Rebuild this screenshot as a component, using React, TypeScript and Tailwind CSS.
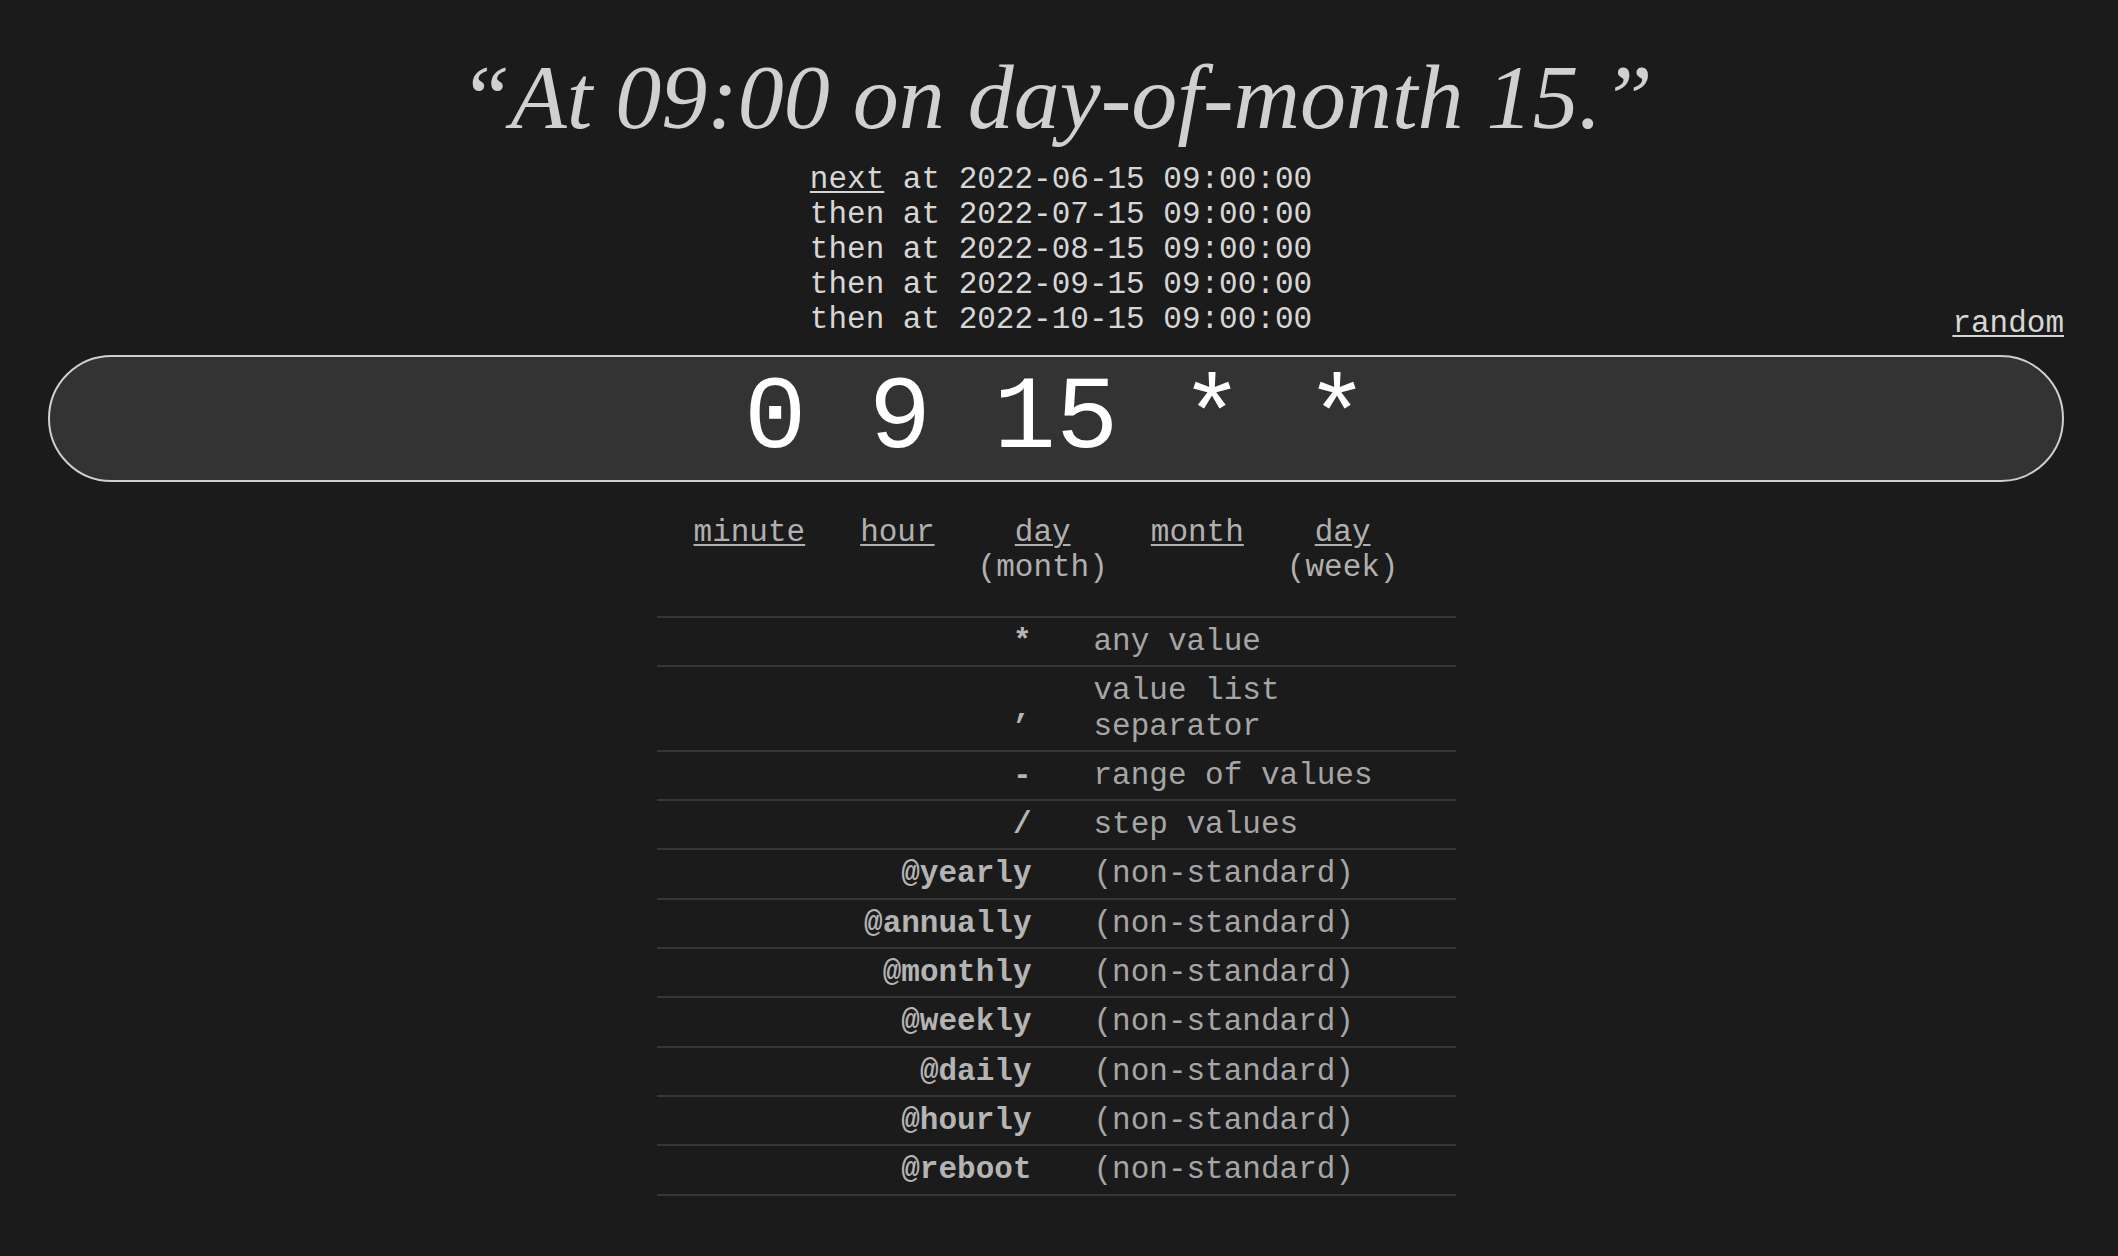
import React from "react";

const mono = { fontFamily: "'Liberation Mono', 'DejaVu Sans Mono', monospace" };

const rows: { sym: string; desc: string; bold?: boolean }[] = [
  { sym: "*", desc: "any value" },
  { sym: ",", desc: "value list separator" },
  { sym: "-", desc: "range of values" },
  { sym: "/", desc: "step values" },
  { sym: "@yearly", desc: "(non-standard)" },
  { sym: "@annually", desc: "(non-standard)" },
  { sym: "@monthly", desc: "(non-standard)" },
  { sym: "@weekly", desc: "(non-standard)" },
  { sym: "@daily", desc: "(non-standard)" },
  { sym: "@hourly", desc: "(non-standard)" },
  { sym: "@reboot", desc: "(non-standard)" },
];

export default function App() {
  return (
    <div className="min-h-screen w-full bg-[#1b1b1b]" style={mono}>
      <div className="ml-[48px] w-[2016px] flex flex-col items-center pt-[47px] pb-[60px]">
        <h1
          className="text-[92px] leading-[100px] italic font-normal text-[#d0d0d0] whitespace-nowrap"
          style={{ fontFamily: "'Liberation Serif', 'DejaVu Serif', serif" }}
        >
          “At 09:00 on day-of-month 15.”
        </h1>

        <div className="mt-[15px] pl-[10px] text-[31px] leading-[35px] text-[#d6d6d6] whitespace-pre">
          <div>
            <span className="underline decoration-2 underline-offset-[3px]">next</span> at 2022-06-15 09:00:00
          </div>
          <div>then at 2022-07-15 09:00:00</div>
          <div>then at 2022-08-15 09:00:00</div>
          <div>then at 2022-09-15 09:00:00</div>
          <div>then at 2022-10-15 09:00:00</div>
        </div>

        <div className="self-stretch flex justify-end -mt-[31px] text-[31px] leading-[35px] text-[#d6d6d6]">
          <span className="underline decoration-2 underline-offset-[3px]">random</span>
        </div>

        <div className="mt-[14px] h-[127px] w-full rounded-full border-2 border-[#cfcfcf] bg-[#333333] flex items-center justify-center text-[104px] text-white whitespace-pre leading-none">
          0 9 15 * *
        </div>

        <div className="mt-[33px] w-full flex justify-center pr-[20px] text-[31px] leading-[35px] text-[#b0b0b0]">
          <div className="flex flex-col items-center mr-[55px]">
            <span className="underline decoration-2 underline-offset-[3px]">minute</span>
          </div>
          <div className="flex flex-col items-center mr-[43px]">
            <span className="underline decoration-2 underline-offset-[3px]">hour</span>
          </div>
          <div className="flex flex-col items-center mr-[43px]">
            <span className="underline decoration-2 underline-offset-[3px]">day</span>
            <span>(month)</span>
          </div>
          <div className="flex flex-col items-center mr-[43px]">
            <span className="underline decoration-2 underline-offset-[3px]">month</span>
          </div>
          <div className="flex flex-col items-center">
            <span className="underline decoration-2 underline-offset-[3px]">day</span>
            <span>(week)</span>
          </div>
        </div>

        <div className="mt-[31px] w-[799px] border-t-2 border-[#363636] text-[31px] leading-[35.3px]">
          {rows.map((r) => (
            <div
              key={r.sym}
              className="grid grid-cols-[405px_1fr] items-center border-b-2 border-[#363636] py-[6px]"
            >
              <div className="text-right pr-[30px] font-bold text-[#b4b4b4]">{r.sym}</div>
              <div className="pl-[32px] text-[#a6a6a6]">{r.desc}</div>
            </div>
          ))}
        </div>
      </div>
    </div>
  );
}
